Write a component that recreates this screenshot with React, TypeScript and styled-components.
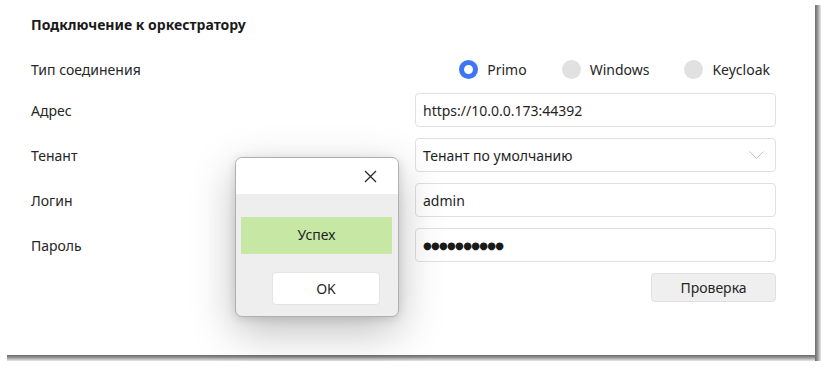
import React from 'react';
import styled, { createGlobalStyle } from 'styled-components';

const Global = createGlobalStyle`
  html, body { margin: 0; padding: 0; background: #ffffff; }
  body { font-family: "Noto Sans", "Segoe UI", sans-serif; color: #1f1f1f; }
  * { box-sizing: border-box; }
`;

const Frame = styled.div`
  width: 822px;
  height: 362px;
  background:
    linear-gradient(to right, #6c6c6c, #8a8a8a 35%, #b9b9b9 65%, #e6e6e6) 815px 5px / 6px 356px no-repeat,
    linear-gradient(to bottom, #6c6c6c, #8a8a8a 35%, #b9b9b9 65%, #e6e6e6) 7px 355px / 808px 6px no-repeat,
    #ffffff;
`;

const Panel = styled.div`
  position: relative;
  width: 815px;
  height: 355px;
  background: #ffffff;
  padding: 15px 39px 0 31px;
`;

const Title = styled.h2`
  margin: 0 0 21px;
  font-size: 14px;
  line-height: 20px;
  font-weight: 700;
  color: #1a1a1a;
`;

const Form = styled.div`
  display: grid;
  grid-template-columns: 384px 361px;
  grid-auto-rows: auto;
  row-gap: 11px;
`;

const Label = styled.div<{ $h?: number }>`
  display: flex;
  align-items: center;
  height: ${p => p.$h ?? 34}px;
  font-size: 14px;
  color: #262626;
`;

const RadioGroup = styled.div`
  display: flex;
  justify-content: flex-end;
  align-items: center;
  gap: 35px;
  height: 26px;
  padding-right: 6px;
`;

const RadioItem = styled.label`
  display: flex;
  align-items: center;
  gap: 9px;
  font-size: 14px;
  color: #262626;
`;

const RadioDot = styled.span<{ $on?: boolean }>`
  width: 19px;
  height: 19px;
  border-radius: 50%;
  background: ${p => (p.$on ? '#ffffff' : '#e1e1e1')};
  border: ${p => (p.$on ? '5px solid #3d75f5' : 'none')};
`;

const Field = styled.div`
  position: relative;
  display: flex;
  align-items: center;
  height: 34px;
  padding: 0 7px;
  border: 1px solid #e0e0e0;
  border-radius: 4px;
  background: #ffffff;
  font-size: 14px;
  color: #1f1f1f;
`;

const Chevron = styled.svg`
  position: absolute;
  right: 11px;
  top: 12px;
`;

const Dots = styled.span`
  font-family: "DejaVu Sans", sans-serif;
  font-size: 10px;
  letter-spacing: -0.7px;
  color: #1a1a1a;
`;

const ButtonRow = styled.div`
  grid-column: 2;
  display: flex;
  justify-content: flex-end;
`;

const CheckButton = styled.button`
  width: 125px;
  height: 29px;
  border: 1px solid #e0e0e0;
  border-radius: 4px;
  background: #efefef;
  font-family: inherit;
  font-size: 14px;
  color: #262626;
`;

const Dialog = styled.div`
  position: absolute;
  left: 235px;
  top: 157px;
  width: 164px;
  height: 160px;
  display: flex;
  flex-direction: column;
  border: 1px solid #b0b0b0;
  border-radius: 7px;
  background: #eeeeee;
  overflow: hidden;
  box-shadow: 0 14px 44px rgba(0, 0, 0, 0.26), 0 2px 10px rgba(0, 0, 0, 0.12);
`;

const DialogHeader = styled.div`
  height: 36px;
  background: #ffffff;
  display: flex;
  justify-content: flex-end;
  align-items: center;
  padding-right: 21px;
`;

const DialogBody = styled.div`
  display: flex;
  flex-direction: column;
  padding: 23px 6px 0 5px;
`;

const Success = styled.div`
  height: 37px;
  padding-bottom: 3px;
  background: #c7e8a5;
  display: flex;
  align-items: center;
  justify-content: center;
  font-size: 14px;
  color: #1f1f1f;
`;

const OkButton = styled.button`
  margin: 18px 0 0 31px;
  width: 108px;
  height: 33px;
  border: 1px solid #e4e4e4;
  border-radius: 4px;
  background: #ffffff;
  font-family: inherit;
  font-size: 14px;
  color: #262626;
`;

export default function App() {
  return (
    <>
      <Global />
      <Frame>
        <Panel>
          <Title>Подключение к оркестратору</Title>
          <Form>
            <Label $h={26}>Тип соединения</Label>
            <RadioGroup>
              <RadioItem><RadioDot $on />Primo</RadioItem>
              <RadioItem><RadioDot />Windows</RadioItem>
              <RadioItem><RadioDot />Keycloak</RadioItem>
            </RadioGroup>

            <Label>Адрес</Label>
            <Field>https://10.0.0.173:44392</Field>

            <Label>Тенант</Label>
            <Field>
              Тенант по умолчанию
              <Chevron width="15" height="9" viewBox="0 0 15 9">
                <polyline points="0.5,0.5 7.5,7.5 14.5,0.5" fill="none" stroke="#c4c4c4" strokeWidth="1" />
              </Chevron>
            </Field>

            <Label>Логин</Label>
            <Field>admin</Field>

            <Label>Пароль</Label>
            <Field><Dots>●●●●●●●●●●</Dots></Field>

            <ButtonRow>
              <CheckButton>Проверка</CheckButton>
            </ButtonRow>
          </Form>

          <Dialog>
            <DialogHeader>
              <svg width="13" height="13" viewBox="0 0 13 13">
                <path d="M1 1 L12 12 M12 1 L1 12" stroke="#2a2a2a" strokeWidth="1.3" fill="none" />
              </svg>
            </DialogHeader>
            <DialogBody>
              <Success>Успех</Success>
              <OkButton>OK</OkButton>
            </DialogBody>
          </Dialog>
        </Panel>
      </Frame>
    </>
  );
}
